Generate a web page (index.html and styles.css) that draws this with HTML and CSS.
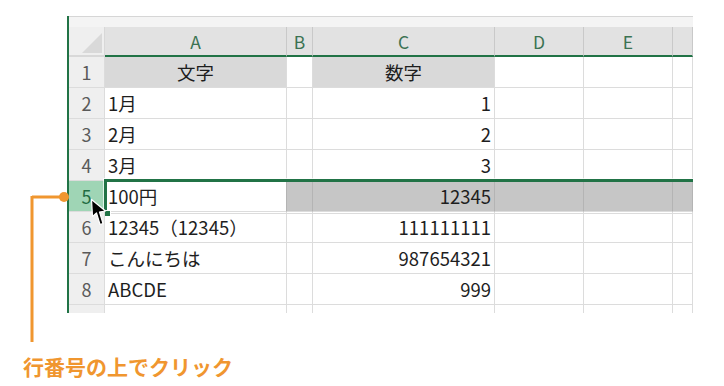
FILE: index.html
```html
<!DOCTYPE html>
<html lang="ja">
<head>
  <meta charset="UTF-8">
  <meta name="viewport" content="width=device-width, initial-scale=1.0">
  <title>行の選択</title>
  <link rel="stylesheet" href="styles.css">
</head>
<body>
  <div class="page">
    <div class="sheet">
      <div class="bar-edge"></div>

      <div class="row head">
        <div class="corner"><span class="tri"></span></div>
        <div class="ch">A</div>
        <div class="ch">B</div>
        <div class="ch">C</div>
        <div class="ch">D</div>
        <div class="ch">E</div>
        <div class="ch"></div>
      </div>

      <div class="row">
        <div class="rh">1</div>
        <div class="cell fill center">文字</div>
        <div class="cell"></div>
        <div class="cell fill center">数字</div>
        <div class="cell"></div>
        <div class="cell"></div>
        <div class="cell"></div>
      </div>
      <div class="row">
        <div class="rh">2</div>
        <div class="cell">1月</div>
        <div class="cell"></div>
        <div class="cell num">1</div>
        <div class="cell"></div>
        <div class="cell"></div>
        <div class="cell"></div>
      </div>
      <div class="row">
        <div class="rh">3</div>
        <div class="cell">2月</div>
        <div class="cell"></div>
        <div class="cell num">2</div>
        <div class="cell"></div>
        <div class="cell"></div>
        <div class="cell"></div>
      </div>
      <div class="row">
        <div class="rh">4</div>
        <div class="cell">3月</div>
        <div class="cell"></div>
        <div class="cell num">3</div>
        <div class="cell"></div>
        <div class="cell"></div>
        <div class="cell"></div>
      </div>
      <div class="row selected">
        <div class="rh">5</div>
        <div class="cell">100円</div>
        <div class="cell"></div>
        <div class="cell num">12345</div>
        <div class="cell"></div>
        <div class="cell"></div>
        <div class="cell"></div>
        <div class="sel-box"><span class="handle"></span></div>
      </div>
      <div class="row">
        <div class="rh">6</div>
        <div class="cell">12345（12345）</div>
        <div class="cell"></div>
        <div class="cell num">111111111</div>
        <div class="cell"></div>
        <div class="cell"></div>
        <div class="cell"></div>
      </div>
      <div class="row">
        <div class="rh">7</div>
        <div class="cell">こんにちは</div>
        <div class="cell"></div>
        <div class="cell num">987654321</div>
        <div class="cell"></div>
        <div class="cell"></div>
        <div class="cell"></div>
      </div>
      <div class="row">
        <div class="rh">8</div>
        <div class="cell">ABCDE</div>
        <div class="cell"></div>
        <div class="cell num">999</div>
        <div class="cell"></div>
        <div class="cell"></div>
        <div class="cell"></div>
      </div>
      <div class="row">
        <div class="rh">9</div>
        <div class="cell"></div>
        <div class="cell"></div>
        <div class="cell"></div>
        <div class="cell"></div>
        <div class="cell"></div>
        <div class="cell"></div>
      </div>
    </div>

    <p class="caption">行番号の上でクリック</p>

    <!-- 引き出し線 -->
    <svg class="callout" width="724" height="386" viewBox="0 0 724 386">
      <path d="M32 197 H62 M32 196 V342" fill="none" stroke="#f0962f" stroke-width="3"/>
      <circle cx="64" cy="197" r="5" fill="#f0962f"/>
    </svg>

    <!-- マウスカーソル -->
    <svg class="cursor" width="18" height="29" viewBox="0 0 18 29">
      <path d="M1.5 1.5 L2.5 18.5 L6.5 15 L10 26.5 L13 25.5 L9.5 14 L15.5 13 Z" fill="#000" stroke="#fff" stroke-width="1.2" stroke-linejoin="round"/>
    </svg>
  </div>
</body>
</html>
```

FILE: styles.css
```css
* {
  box-sizing: border-box;
}
body {
  margin: 0;
  background: #fff;
  font-family: "Noto Sans CJK JP", "Noto Sans", sans-serif;
}

:root {
  --xl-green: #217346;
  --grid-line: #dcdcdc;
  --orange: #f0962f;
}

.page {
  position: relative;
  width: 724px;
  height: 386px;
  padding-top: 16px;
}

/* シート部分 */
.sheet {
  margin-left: 67px;
  width: 626px;
  height: 297px;
  border-left: 2px solid var(--xl-green);
  overflow: hidden;
}
.bar-edge {
  height: 11px;
  border-top: 1px solid #d6d6d6;
  background: #f4f4f4;
}

.row {
  position: relative;
  display: grid;
  grid-template-columns: 36px 182px 26px 182px 89px 89px 20px;
  height: 31px;
}
.row > div {
  border-right: 1px solid var(--grid-line);
  border-bottom: 1px solid var(--grid-line);
}

/* 見出し */
.row.head {
  height: 30px;
}
.row.head > div {
  border-bottom: 2px solid var(--xl-green);
  border-right-color: #c9c9c9;
}
.row.head > .corner {
  position: relative;
  background: #efefef;
  border-bottom-color: #d8d8d8;
  border-right-color: #d8d8d8;
}
.tri {
  position: absolute;
  right: 2px;
  bottom: 2px;
  width: 0;
  height: 0;
  border-left: 20px solid transparent;
  border-bottom: 20px solid #d9d9d9;
}
.ch {
  display: flex;
  align-items: center;
  justify-content: center;
  background: #e2e2e2;
  color: #3b7352;
  font-size: 17.5px;
}

.rh {
  display: flex;
  align-items: center;
  justify-content: center;
  background: #efefef;
  color: #5a5a5a;
  font-size: 18px;
}

.cell {
  display: flex;
  align-items: center;
  padding: 0 3px;
  color: #1e1e1e;
  font-size: 18.5px;
  white-space: nowrap;
}
.cell.center {
  justify-content: center;
}
.cell.num {
  justify-content: flex-end;
}
.cell.fill {
  background: #d9d9d9;
}

/* 選択された行 */
.row.selected > .rh {
  background: #9fd5b5;
  color: #1f6b41;
}
.row.selected > .cell {
  background: #c6c6c6;
  border-right-color: #b4b4b4;
}
.row.selected > .cell:nth-child(2) {
  background: #fff;
}
.sel-box {
  position: absolute;
  left: 35px;
  right: -4px;
  top: -2px;
  bottom: -2px;
  border: 3px solid var(--xl-green);
  box-shadow: 0 0 0 1px rgba(255, 255, 255, 0.7);
}
.handle {
  position: absolute;
  left: -3px;
  bottom: -4px;
  width: 7px;
  height: 7px;
  background: var(--xl-green);
  border: 1px solid #fff;
}

/* 注釈 */
.caption {
  margin: 43px 0 0 23px;
  font-size: 21px;
  line-height: 21px;
  font-weight: 700;
  color: var(--orange);
}
.callout {
  position: absolute;
  left: 0;
  top: 0;
  pointer-events: none;
}
.cursor {
  position: absolute;
  left: 90px;
  top: 198px;
}
```
